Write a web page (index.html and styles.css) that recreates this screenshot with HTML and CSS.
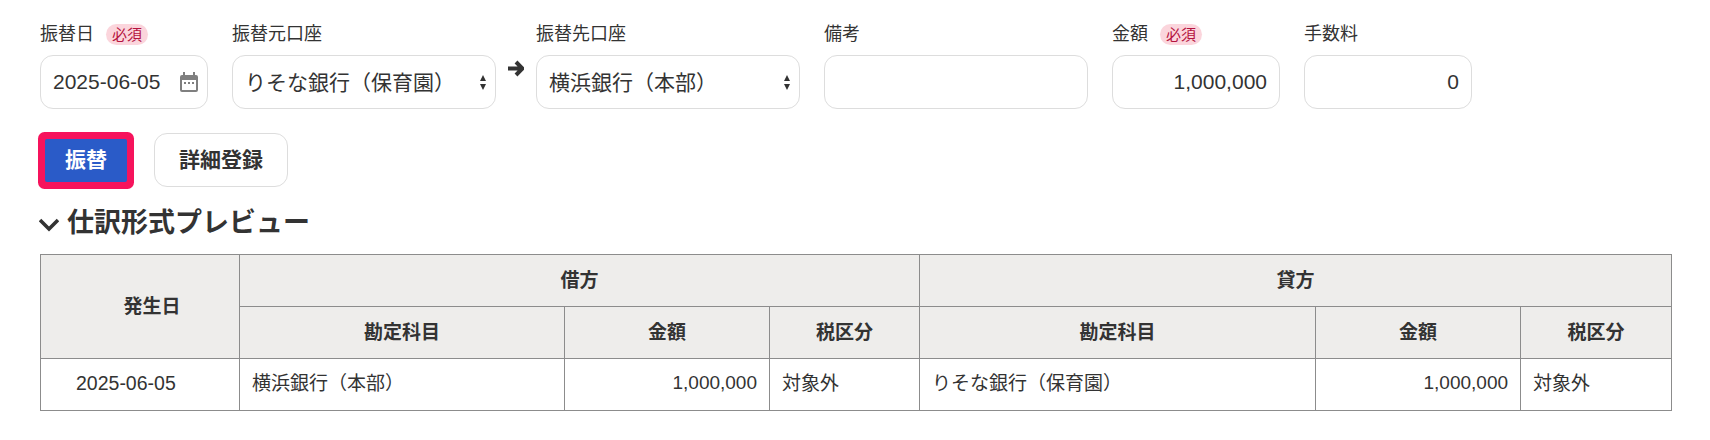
FILE: index.html
```html
<!DOCTYPE html>
<html lang="ja">
<head>
  <meta charset="UTF-8" />
  <title>振替</title>
  <link rel="stylesheet" href="styles.css">
</head>
<body>
  <div class="container">
    <div class="form-row">
      <div class="field w-sm">
        <div class="field-label">振替日<span class="badge">必須</span></div>
        <div class="box">
          <input class="control" type="text" value="2025-06-05" />
          <svg class="cal-icon" viewBox="0 0 18 20"><path d="M3 0h2v3h8V0h2v3h1a2 2 0 0 1 2 2v13a2 2 0 0 1-2 2H2a2 2 0 0 1-2-2V5a2 2 0 0 1 2-2h1zM2 8v10h14V8z" fill="#7f7f7f" fill-rule="evenodd"/><path d="M4 10h2v2H4zM8 10h2v2H8zM12 10h2v2h-2z" fill="#7f7f7f"/></svg>
        </div>
      </div>
      <div class="field w-lg">
        <div class="field-label">振替元口座</div>
        <div class="box">
          <select class="control"><option>りそな銀行（保育園）</option></select>
          <svg class="sort-icon" viewBox="0 0 6 15"><path d="M3 0l3 6H0zM3 15l3-6H0z" fill="#333"/></svg>
        </div>
      </div>
      <div class="arrow-col">
        <svg class="arrow-icon" viewBox="0 0 17 17"><path d="M9 2l6.500 6.500L9 15M1 8.500h13" fill="none" stroke="#333" stroke-width="4"/></svg>
      </div>
      <div class="field w-lg">
        <div class="field-label">振替先口座</div>
        <div class="box">
          <select class="control"><option>横浜銀行（本部）</option></select>
          <svg class="sort-icon" viewBox="0 0 6 15"><path d="M3 0l3 6H0zM3 15l3-6H0z" fill="#333"/></svg>
        </div>
      </div>
      <div class="field w-lg">
        <div class="field-label">備考</div>
        <div class="box"><input class="control" type="text" /></div>
      </div>
      <div class="field w-sm">
        <div class="field-label">金額<span class="badge">必須</span></div>
        <div class="box"><input class="control num" type="text" value="1,000,000" /></div>
      </div>
      <div class="field w-sm">
        <div class="field-label">手数料</div>
        <div class="box"><input class="control num" type="text" value="0" /></div>
      </div>
    </div>

    <div class="btn-row">
      <button class="btn btn-primary">振替</button>
      <button class="btn">詳細登録</button>
    </div>

    <h2 class="preview-title">
      <svg class="chevron" viewBox="0 0 20 14"><path d="M1 2l9 9 9-9" fill="none" stroke="#333" stroke-width="3.600"/></svg>
      仕訳形式プレビュー
    </h2>

    <table class="journal">
      <colgroup>
        <col class="c1"><col class="c2"><col class="c3"><col class="c4"><col class="c5"><col class="c6"><col class="c7">
      </colgroup>
      <thead>
        <tr>
          <th class="date-head" rowspan="2">発生日</th>
          <th colspan="3">借方</th>
          <th colspan="3">貸方</th>
        </tr>
        <tr>
          <th>勘定科目</th>
          <th>金額</th>
          <th>税区分</th>
          <th>勘定科目</th>
          <th>金額</th>
          <th>税区分</th>
        </tr>
      </thead>
      <tbody>
        <tr>
          <td class="date">2025-06-05</td>
          <td class="text">横浜銀行（本部）</td>
          <td class="right">1,000,000</td>
          <td class="text">対象外</td>
          <td class="text">りそな銀行（保育園）</td>
          <td class="right">1,000,000</td>
          <td class="text">対象外</td>
        </tr>
      </tbody>
    </table>
  </div>
</body>
</html>
```

FILE: styles.css
```css
body {
  font-family: "Liberation Sans", "Noto Sans CJK JP", sans-serif;
  color: #333;
  background: #fff;
  margin: 0;
  padding: 0;
}
.container {
  padding: 24px 30px 0 40px;
}
.form-row {
  display: flex;
  gap: 24px;
}
.field-label {
  height: 31px;
  font-size: 18px;
  line-height: 20px;
  display: flex;
  align-items: flex-start;
}
.badge {
  margin-left: 12px;
  height: 21px;
  padding: 0 6px;
  border-radius: 11px;
  background: #fbd5dc;
  color: #b5133f;
  font-size: 15px;
  line-height: 21px;
}
.w-sm { width: 168px; }
.w-lg { width: 264px; }
.box {
  height: 54px;
  box-sizing: border-box;
  border: 1px solid #ddd;
  border-radius: 13px;
  display: flex;
  align-items: center;
  padding: 0 12px;
  background: #fff;
}
.control {
  flex: 1;
  min-width: 0;
  width: 100%;
  border: 0;
  outline: 0;
  padding: 0;
  margin: 0;
  background: transparent;
  color: #333;
  font: inherit;
  font-size: 21px;
  appearance: none;
}
.num { text-align: right; }
.cal-icon { width: 18px; height: 20px; margin-right: -3px; flex: none; }
.sort-icon { width: 6px; height: 15px; margin-right: -3px; flex: none; }
.arrow-col {
  width: 16px;
  margin: 0 -11px 0 -13px;
  padding-top: 36px;
}
.arrow-icon { display: block; width: 17px; height: 17px; }
.btn-row {
  display: flex;
  align-items: center;
  gap: 27px;
  margin-top: 24px;
}
.btn {
  height: 54px;
  width: 134px;
  box-sizing: border-box;
  border: 1px solid #ddd;
  border-radius: 13px;
  background: #fff;
  color: #333;
  font: inherit;
  font-size: 21px;
  font-weight: bold;
  padding: 0 0 4px;
}
.btn-primary {
  width: 82px;
  height: 43px;
  margin-left: 5px;
  border: 0;
  border-radius: 2px;
  background: #2a5bc8;
  color: #fff;
  box-shadow: 0 0 0 7px #f6135c;
}
.preview-title {
  display: flex;
  align-items: center;
  gap: 8px;
  margin: 16px 0 0 -1px;
  font-size: 27px;
  line-height: 40px;
  font-weight: bold;
}
.chevron { width: 20px; height: 14px; margin-top: 3px; }
.journal {
  width: 1631px;
  margin-top: 11px;
  border-collapse: collapse;
  table-layout: fixed;
  font-size: 19px;
}
.c1 { width: 199px; }
.c2 { width: 325px; }
.c3 { width: 205px; }
.c4 { width: 150px; }
.c5 { width: 396px; }
.c6 { width: 205px; }
.c7 { width: 151px; }
.journal th, .journal td {
  height: 52px;
  padding: 0 12px;
  border: 1px solid #8c8c8c;
  box-sizing: border-box;
}
.journal th {
  padding-bottom: 4px;
  background: #eeedeb;
  font-weight: bold;
  text-align: center;
}
.journal th.date-head { padding-left: 36px; }
.journal td {
  padding-bottom: 3px;
  text-align: left;
}
.journal td.text { padding-bottom: 7px; }
.journal td.date {
  padding-left: 35px;
  font-size: 19.500px;
}
.journal td.right { text-align: right; }
```
